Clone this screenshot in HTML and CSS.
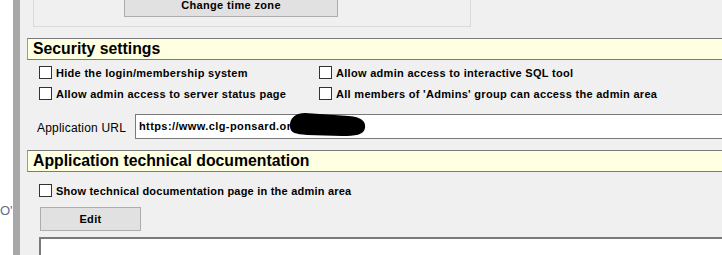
FILE: index.html
```html
<!DOCTYPE html>
<html>
<head>
	<title>Settings</title>
	<link rel="stylesheet" href="styles.css">
</head>
<body>

<div class="page">

	<div class="side">
		<span class="side-text">O'</span>
	</div>

	<div class="panel">

		<div class="tz-box">
			<button class="btn btn-tz">Change time zone</button>
		</div>

		<h2 class="section-head">Security settings</h2>

		<div class="options">
			<label class="opt"><span class="box"></span>Hide the login/membership system</label>
			<label class="opt"><span class="box"></span>Allow admin access to interactive SQL tool</label>
			<label class="opt"><span class="box"></span>Allow admin access to server status page</label>
			<label class="opt"><span class="box"></span>All members of 'Admins' group can access the admin area</label>
		</div>

		<div class="url-row">
			<span class="url-label">Application URL</span>
			<div class="url-field">
				https://www.clg-ponsard.or
				<svg class="redact" width="80" height="28" viewBox="0 0 80 28">
					<path d="M3 16 C2 6, 10 2, 18 2 L62 5 C74 6, 79 10, 78 17 C77 24, 68 25, 55 25 L20 24 C8 23, 4 22, 3 16 Z" fill="#000"/>
				</svg>
			</div>
		</div>

		<h2 class="section-head">Application technical documentation</h2>

		<label class="opt opt-single"><span class="box"></span>Show technical documentation page in the admin area</label>

		<button class="btn btn-edit">Edit</button>

		<div class="doc-area"></div>

	</div>

</div>

</body>
</html>
```

FILE: styles.css
```css
*{
	margin: 0;
	padding: 0;
	box-sizing: border-box;
}

body{
	background: #fff;
	font-family: "Liberation Sans", Arial, sans-serif;
	color: #000;
	overflow: hidden;
	height: 255px;
}

.page{
	display: flex;
	height: 255px;
}

.side{
	width: 13px;
	flex: none;
	padding-top: 203px;
}

.side-text{
	display: block;
	font-size: 13px;
	color: #5d6c8e;
	white-space: nowrap;
}

.panel{
	flex: 1;
	min-width: 0;
	overflow: hidden;
	background: #f0f0f0;
	border-left: 7px solid #a8a8a8;
	padding-left: 7px;
}

/* top box, mostly scrolled out */
.tz-box{
	width: 438px;
	margin-left: 6px;
	margin-top: -20px;
	padding: 12px 0 9px 90px;
	border: 1px solid #dadada;
}

.btn{
	display: block;
	font-family: "Liberation Sans", Arial, sans-serif;
	font-size: 11px;
	font-weight: bold;
	letter-spacing: 0.35px;
	color: #000;
	background: #e1e1e1;
	border: 1px solid #adadad;
	height: 24px;
}

.btn-tz{
	width: 214px;
}

.section-head{
	font-size: 15.8px;
	font-weight: bold;
	height: 22px;
	line-height: 20px;
	padding-left: 5px;
	background: #ffffe1;
	border: 1px solid #7a7a7a;
	border-left-color: #9a9a9a;
	border-right: none;
	width: 720px;
	margin-top: 11px;
}

.options{
	display: grid;
	grid-template-columns: 280px 1fr;
	margin-top: 2px;
	margin-left: 12px;
}

.opt{
	display: flex;
	align-items: center;
	height: 21px;
	font-size: 11px;
	font-weight: bold;
	letter-spacing: 0.3px;
	white-space: nowrap;
}

.box{
	width: 13px;
	height: 13px;
	flex: none;
	background: #fff;
	border: 1px solid #333;
	margin-right: 4px;
}

.url-row{
	display: flex;
	align-items: center;
	margin-top: 10px;
	margin-left: 10px;
}

.url-label{
	font-size: 12px;
	letter-spacing: 0.2px;
	width: 98px;
	flex: none;
	padding-top: 2px;
}

.url-field{
	position: relative;
	flex: none;
	width: 700px;
	height: 25px;
	background: #fff;
	border: 1px solid #7a7a7a;
	font-size: 11px;
	font-weight: bold;
	letter-spacing: 0.4px;
	padding: 5px 0 0 3px;
	white-space: nowrap;
}

.redact{
	position: absolute;
	left: 151px;
	top: -4px;
}

.opt-single{
	margin-top: 8px;
	margin-left: 12px;
	letter-spacing: 0.22px;
}

.btn-edit{
	width: 101px;
	margin-top: 6px;
	margin-left: 13px;
}

.doc-area{
	margin-top: 6px;
	margin-left: 12px;
	width: 700px;
	height: 40px;
	background: #fff;
	border: 2px solid #7a7a7a;
	border-right: none;
}
```
